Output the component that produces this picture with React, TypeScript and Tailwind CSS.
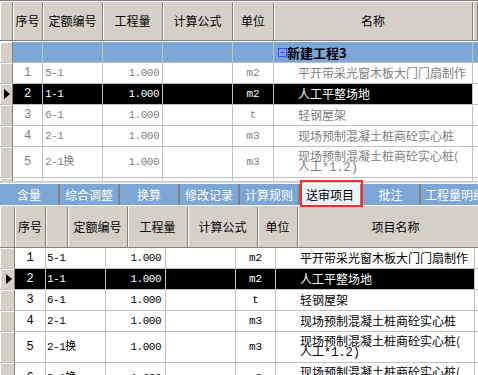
import React from 'react';

type Row = { n: number; code: string; qty: string; unit: string; name: string[] };

const rows: Row[] = [
  { n: 1, code: '5-1', qty: '1.000', unit: 'm2', name: ['平开带采光窗木板大门门扇制作'] },
  { n: 2, code: '1-1', qty: '1.000', unit: 'm2', name: ['人工平整场地'] },
  { n: 3, code: '6-1', qty: '1.000', unit: 't', name: ['轻钢屋架'] },
  { n: 4, code: '2-1', qty: '1.000', unit: 'm3', name: ['现场预制混凝土桩商砼实心桩'] },
  { n: 5, code: '2-1换', qty: '1.000', unit: 'm3', name: ['现场预制混凝土桩商砼实心桩(', '人工*1.2)'] },
  { n: 6, code: '2-1换', qty: '1.000', unit: 'm3', name: ['现场预制混凝土桩商砼实心桩(', '人工*1.2)'] },
];

const tabs = ['含量', '综合调整', '换算', '修改记录', '计算规则', '送审项目', '批注', '工程量明细'];

const mono = "font-['Liberation_Mono','Noto_Sans_CJK_SC',monospace]";
const hdr = 'flex items-center justify-center border-r border-[#808080] shadow-[inset_1px_0_0_#ffffff] text-[12px] leading-none text-black whitespace-nowrap';
const cell = 'flex items-center border-r border-[#c0c0c0] overflow-hidden whitespace-nowrap leading-none';

function Arrow() {
  return (
    <svg width="6" height="10" viewBox="0 0 6 10">
      <path d="M0 0 L6 5 L0 10 Z" fill="#000" />
    </svg>
  );
}

function Indicator({ sel, top }: { sel: boolean; top: boolean }) {
  return (
    <div className={`flex items-center ${top ? 'pl-[4px]' : 'pl-[6px]'} bg-[#d4d0c8] border-r border-[#808080] shadow-[inset_1px_1px_0_#ffffff]`}>
      {sel && <Arrow />}
    </div>
  );
}

function BodyRow({ r, cols, top }: { r: Row; cols: string; top: boolean }) {
  const sel = r.n === 2;
  const tall = r.name.length > 1;
  const color = sel ? 'bg-black text-white' : top ? 'bg-white text-[#808080]' : 'bg-white text-black';
  return (
    <div className={`grid ${cols} ${tall ? 'h-[31px]' : 'h-[21px]'} border-b border-[#c0c0c0] ${color}`}>
      <Indicator sel={sel} top={top} />
      <div className={`${cell} justify-center ${mono} text-[12px]`}>{r.n}</div>
      <div className={`${cell} ${top ? 'pl-[2px]' : 'pl-[1px]'} ${mono} text-[11px] tracking-[-0.5px]`}>{r.code}</div>
      <div className={`${cell} justify-end ${top ? 'pr-[3px]' : 'pr-[4px]'} ${mono} text-[11px] tracking-[-0.5px]`}>{r.qty}</div>
      <div className={cell} />
      <div className={`${cell} justify-center ${mono} text-[11px]`}>{r.unit}</div>
      {tall ? (
        <div className="flex flex-col pl-[24px] pt-[2px] border-r border-[#c0c0c0] text-[12px] whitespace-nowrap overflow-hidden">
          <div className="h-[13px] leading-[13px]">{r.name[0]}</div>
          <div className={`h-[13px] leading-[13px] ${mono}`}>{r.name[1]}</div>
        </div>
      ) : (
        <div className="flex items-center pl-[24px] border-r border-[#c0c0c0] text-[12px] leading-none whitespace-nowrap overflow-hidden">
          {r.name[0]}
        </div>
      )}
      <div className="bg-white" />
    </div>
  );
}

export default function App() {
  const topCols = 'grid-cols-[13px_30px_60px_60px_70px_41px_199px_5px]';
  const botHead = 'grid-cols-[15px_31px_22px_60px_60px_70px_40px_196px]';
  const botCols = 'grid-cols-[15px_31px_60px_60px_70px_40px_199px_3px]';

  return (
    <div className="relative w-[478px] h-[375px] overflow-hidden bg-[#d4d0c8] font-['Noto_Sans_CJK_SC',sans-serif]">
      {/* upper grid */}
      <div className="h-[181px] overflow-hidden bg-white">
        <div className="h-px bg-[#808080]" />
        <div className="h-px bg-white" />
        <div className={`grid ${topCols} h-[39px] border-b border-[#808080] bg-[#d4d0c8]`}>
          <div className={hdr} />
          <div className={hdr}>序号</div>
          <div className={hdr}>定额编号</div>
          <div className={hdr}>工程量</div>
          <div className={hdr}>计算公式</div>
          <div className={hdr}>单位</div>
          <div className={hdr}>名称</div>
          <div className={hdr} />
        </div>
        <div className="h-px bg-white" />
        <div className={`grid ${topCols} h-[21px] border-b border-[#c0c0c0] bg-[#7ca6d5]`}>
          <div className="bg-[#d4d0c8] border-r border-[#808080] shadow-[inset_1px_1px_0_#ffffff]" />
          <div className="border-r border-[#c0c0c0]" />
          <div className="border-r border-[#c0c0c0]" />
          <div className="border-r border-[#c0c0c0]" />
          <div className="border-r border-[#c0c0c0]" />
          <div className="border-r border-[#c0c0c0]" />
          <div className="flex items-center pl-[4px] border-r border-[#c0c0c0]">
            <span className="flex items-center justify-center w-[9px] h-[9px] border border-[#4a4aff]">
              <span className="w-[5px] h-px bg-[#4a4aff]" />
            </span>
            <span className="text-[13px] font-bold text-black leading-none">新建工程3</span>
          </div>
          <div />
        </div>
        {rows.map((r) => (
          <BodyRow key={r.n} r={r} cols={topCols} top />
        ))}
      </div>

      <div className="h-[2px] bg-[#d4d0c8]" />
      <div className="h-px bg-white" />

      {/* tabs */}
      <div className="grid grid-cols-[60px_60px_60px_60px_60px_62px_59px_70px] h-[21px] bg-[#7ca6d5] overflow-hidden">
        {tabs.map((t) => (
          <div
            key={t}
            className={`flex items-center justify-center text-[12px] leading-none border-r-2 border-[#808080] whitespace-nowrap ${
              t === '送审项目' ? 'bg-[#eef2fa] text-black' : 'text-white'
            }`}
          >
            {t}
          </div>
        ))}
      </div>
      <div className="h-px bg-white" />
      <div className="h-px bg-[#d4d0c8]" />

      {/* lower grid */}
      <div className={`grid ${botHead} h-[41px] border-b border-[#808080] bg-[#d4d0c8] overflow-hidden`}>
        <div className={hdr} />
        <div className={hdr}>序号</div>
        <div className={hdr} />
        <div className={hdr}>定额编号</div>
        <div className={hdr}>工程量</div>
        <div className={hdr}>计算公式</div>
        <div className={hdr}>单位</div>
        <div className={hdr}>项目名称</div>
      </div>
      <div className="bg-white">
        {rows.map((r) => (
          <BodyRow key={r.n} r={r} cols={botCols} top={false} />
        ))}
      </div>

      {/* highlight box */}
      <div className="absolute left-[300px] top-[180px] w-[63px] h-[27px] border-2 border-[#ff2b2b]" />
    </div>
  );
}
